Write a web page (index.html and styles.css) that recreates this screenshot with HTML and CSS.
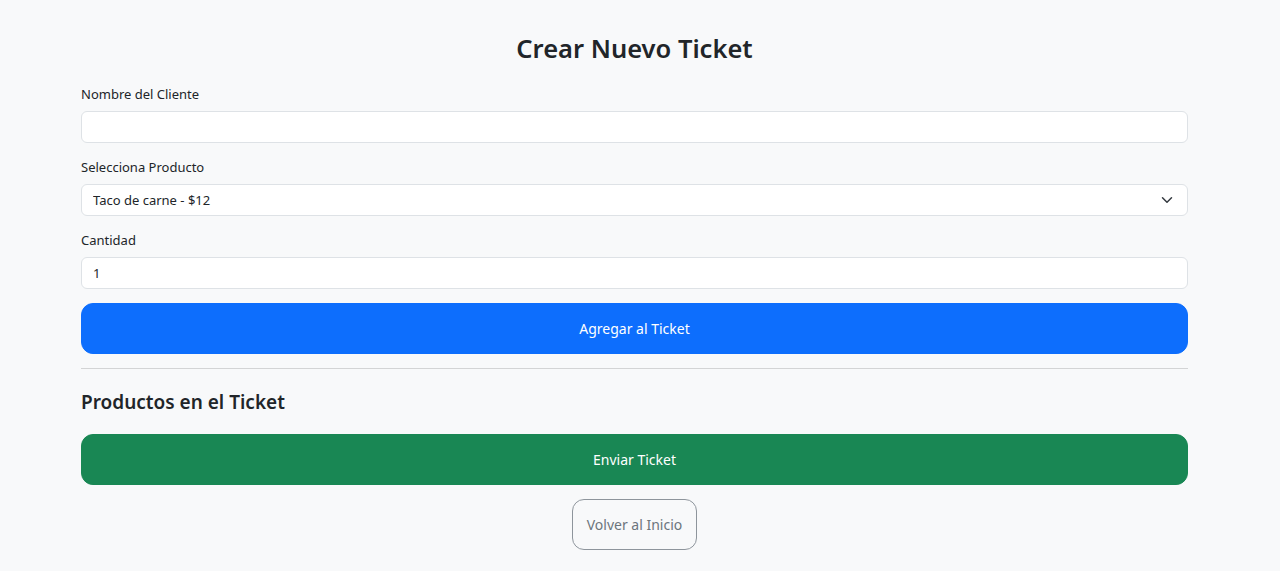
FILE: index.html
```html
<!DOCTYPE html>
<html lang="es">
<head>
    <meta charset="UTF-8">
    <meta name="viewport" content="width=device-width, initial-scale=1.0">
    <title>Crear Nuevo Ticket</title>
    <link rel="stylesheet" href="styles.css">
</head>
<body>
    <div class="container">
        <h2 class="title">Crear Nuevo Ticket</h2>
        <form id="ticket-form">
            <div class="field">
                <label for="cliente">Nombre del Cliente</label>
                <input type="text" id="cliente" class="control">
            </div>
            <div class="field">
                <label for="producto">Selecciona Producto</label>
                <div class="select-wrap">
                    <select id="producto" class="control">
                        <option>Taco de carne - $12</option>
                    </select>
                    <svg class="chevron" width="16" height="16" viewBox="0 0 16 16"><path fill="none" stroke="#343a40" stroke-linecap="round" stroke-linejoin="round" stroke-width="2" d="m2 5 6 6 6-6"/></svg>
                </div>
            </div>
            <div class="field">
                <label for="cantidad">Cantidad</label>
                <input type="number" id="cantidad" class="control" value="1">
            </div>
            <button type="button" class="btn btn-primary">Agregar al Ticket</button>
        </form>
        <hr>
        <h4 class="subtitle">Productos en el Ticket</h4>
        <ul id="items"></ul>
        <button type="button" class="btn btn-success">Enviar Ticket</button>
        <div class="back">
            <a href="#" class="btn btn-outline">Volver al Inicio</a>
        </div>
    </div>
</body>
</html>
```

FILE: styles.css
```css
body {
    margin: 0;
    padding: 31px 11px 0 0;
    background: #f8f9fa;
    color: #212529;
    font-family: "Noto Sans", "Open Sans", sans-serif;
}

.container {
    max-width: 1107px;
    margin: 0 auto;
}

.title {
    margin: 0 0 19px;
    font-size: 25.5px;
    font-weight: 600;
    line-height: 34px;
    text-align: center;
}

.field {
    margin-bottom: 14px;
}

label {
    display: block;
    margin-bottom: 6px;
    font-size: 13px;
    line-height: 21px;
}

.control {
    display: block;
    width: 100%;
    box-sizing: border-box;
    height: 32px;
    padding: 4px 11px;
    font-family: inherit;
    font-size: 13px;
    color: #212529;
    background: #fff;
    border: 1px solid #dee2e6;
    border-radius: 6px;
    outline: none;
}

.select-wrap {
    position: relative;
}

select.control {
    appearance: none;
    -webkit-appearance: none;
}

.chevron {
    position: absolute;
    right: 15px;
    top: 10px;
    width: 12px;
    height: 12px;
}

.btn {
    display: block;
    width: 100%;
    box-sizing: border-box;
    padding: 13px 14px;
    font-family: inherit;
    font-size: 14px;
    line-height: 23px;
    border: 1px solid transparent;
    border-radius: 12px;
    text-align: center;
    text-decoration: none;
    cursor: pointer;
}

.btn-primary {
    margin-top: 1px;
    background: #0d6efd;
    border-color: #0d6efd;
    color: #fff;
}

.btn-success {
    background: #198754;
    border-color: #198754;
    color: #fff;
}

hr {
    margin: 14px 0;
    border: 0;
    border-top: 1px solid #d3d4d5;
}

.subtitle {
    margin: 21px 0 20px;
    font-size: 19px;
    font-weight: 600;
    line-height: 24px;
}

#items {
    margin: 0;
    padding: 0;
    list-style: none;
}

.back {
    display: flex;
    justify-content: center;
    margin-top: 14px;
}

.btn-outline {
    display: inline-block;
    width: auto;
    color: #6c757d;
    border-color: #8e959c;
    background: transparent;
}
```
